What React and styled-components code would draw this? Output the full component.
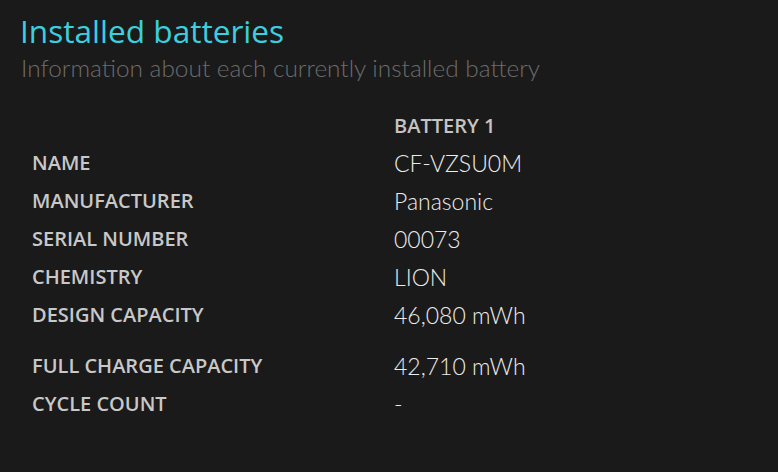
import React from "react";
import styled, { createGlobalStyle } from "styled-components";

const GlobalStyle = createGlobalStyle`
  html, body {
    margin: 0;
    background: #1a1a1a;
  }
  body {
    font-family: "Open Sans", "Noto Sans", sans-serif;
  }
`;

const Page = styled.div`
  width: 778px;
  height: 472px;
  box-sizing: border-box;
  padding: 10px 0 0 20px;
  background: #1a1a1a;
  overflow: hidden;
`;

const Title = styled.h1`
  margin: 0;
  font-size: 31.6px;
  font-weight: 400;
  line-height: 42px;
  color: #3bcfdf;
`;

const Subtitle = styled.div`
  margin: 0 0 0 1px;
  font-family: "Lato", "Open Sans", sans-serif;
  font-size: 24.4px;
  font-weight: 300;
  line-height: 32px;
  color: #6c6c6c;
`;

const Table = styled.table`
  margin-top: 22px;
  margin-left: 12px;
  border-collapse: collapse;
`;

const HeadCell = styled.th`
  padding: 0;
  height: 38px;
  text-align: left;
  vertical-align: middle;
  font-size: 20px;
  font-weight: 600;
  color: #c4c4c4;
`;

const Row = styled.tr`
  height: ${(p) => (p.$tall ? "51px" : "38px")};
`;

const Label = styled.td`
  padding: 0;
  width: 362px;
  vertical-align: bottom;
  font-size: 20px;
  font-weight: 600;
  line-height: 38px;
  color: #c8c8c8;
`;

const Value = styled.td`
  padding: 0;
  vertical-align: bottom;
  font-family: "Lato", "Open Sans", sans-serif;
  font-size: 23px;
  font-weight: 300;
  line-height: 38px;
  color: #ececec;
`;

const rows = [
  ["NAME", "CF-VZSU0M"],
  ["MANUFACTURER", "Panasonic"],
  ["SERIAL NUMBER", "00073"],
  ["CHEMISTRY", "LION"],
  ["DESIGN CAPACITY", "46,080 mWh"],
  ["FULL CHARGE CAPACITY", "42,710 mWh", true],
  ["CYCLE COUNT", "-"],
];

export default function App() {
  return (
    <Page>
      <GlobalStyle />
      <Title>Installed batteries</Title>
      <Subtitle>Information about each currently installed battery</Subtitle>
      <Table>
        <thead>
          <tr>
            <HeadCell />
            <HeadCell>BATTERY 1</HeadCell>
          </tr>
        </thead>
        <tbody>
          {rows.map(([label, value, tall]) => (
            <Row key={label} $tall={tall}>
              <Label>{label}</Label>
              <Value>{value}</Value>
            </Row>
          ))}
        </tbody>
      </Table>
    </Page>
  );
}
